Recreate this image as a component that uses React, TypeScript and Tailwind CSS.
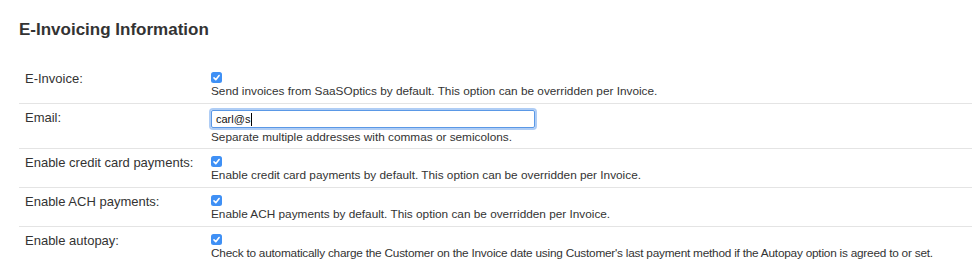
const CheckIcon = () => (
  <svg width="11" height="11" viewBox="0 0 11 11" fill="none" className="block">
    <rect width="11" height="11" rx="2.5" fill="#3f90f5" />
    <path d="M3 5.9l1.8 1.8 3.3-4.2" stroke="#fff" strokeWidth="1.6" strokeLinecap="round" strokeLinejoin="round" />
  </svg>
)

interface RowProps {
  label: string
  help: string
  first?: boolean
  tight?: boolean
}

const Row = ({ label, help, first, tight }: RowProps) => (
  <div className={`flex ${first ? '' : 'border-t border-[#e4e4e4]'}`}>
    <div className="w-[192px] shrink-0 pl-[6px] pt-[6px] text-[13px] leading-[16px]">{label}</div>
    <div className="flex-1 pt-[7px] pb-[5px]">
      <CheckIcon />
      <div className={`mt-[1px] text-[11.8px] leading-[14px] whitespace-nowrap ${tight ? 'tracking-[-0.22px]' : ''}`}>{help}</div>
    </div>
  </div>
)

export default function App() {
  return (
    <div className="w-[972px] h-[265px] overflow-hidden bg-white text-[#333] font-['Liberation_Sans',Arial,sans-serif]">
      <div className="pl-[19px] pt-[20px]">
        <h2 className="text-[17px] leading-[20px] font-bold">E-Invoicing Information</h2>
        <div className="mt-[25px]">
          <Row
            first
            label="E-Invoice:"
            help="Send invoices from SaaSOptics by default. This option can be overridden per Invoice."
          />
          <div className="flex border-t border-[#e4e4e4]">
            <div className="w-[192px] shrink-0 pl-[6px] pt-[6px] text-[13px] leading-[16px]">Email:</div>
            <div className="flex-1 pt-[6px] pb-[4px]">
              <div className="w-[324px] h-[18px] flex items-center pl-[4px] border border-[#5a98e6] rounded-[2px] shadow-[0_0_0_2px_rgba(122,172,238,0.6)] text-[11px] text-[#111]">
                carl@s
                <span className="inline-block w-px h-[13px] bg-black ml-[1px]" />
              </div>
              <div className="mt-[2px] text-[11.8px] leading-[14px] whitespace-nowrap">Separate multiple addresses with commas or semicolons.</div>
            </div>
          </div>
          <Row
            label="Enable credit card payments:"
            help="Enable credit card payments by default. This option can be overridden per Invoice."
          />
          <Row
            label="Enable ACH payments:"
            help="Enable ACH payments by default. This option can be overridden per Invoice."
          />
          <Row
            tight
            label="Enable autopay:"
            help="Check to automatically charge the Customer on the Invoice date using Customer's last payment method if the Autopay option is agreed to or set."
          />
        </div>
      </div>
    </div>
  )
}
